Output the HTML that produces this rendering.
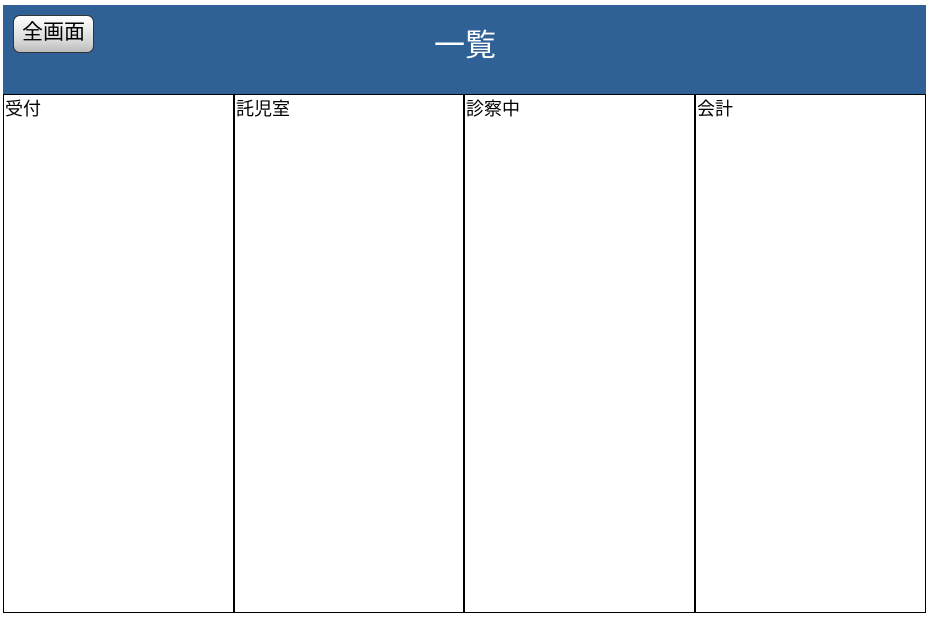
<!DOCTYPE html>
<html><head><meta charset="utf-8"><style>
body{margin:0;background:#fff;width:930px;height:628px;position:relative;overflow:hidden;font-family:"Liberation Sans","Noto Sans CJK JP",sans-serif;}
#hd{position:absolute;left:3px;top:5px;width:923px;height:89px;background:#2f6096;}
#btn{position:absolute;left:13px;top:15px;width:79px;height:36px;border:1px solid #333;border-radius:7px;background:linear-gradient(#fff,#d8d8d8 70%,#bbb);font-size:21px;line-height:34px;text-align:center;color:#000;}
#tt{position:absolute;left:0;width:930px;top:26px;text-align:center;color:#fff;font-size:31px;line-height:40px;}
.c{position:absolute;top:94px;height:517px;border:1px solid #000;font-size:18px;line-height:29px;padding-left:1px;}
</style></head><body>
<div id="hd"></div>
<div id="btn">全画面</div>
<div id="tt">一覧</div>
<div class="c" style="left:3px;width:228px">受付</div>
<div class="c" style="left:234px;width:227px">託児室</div>
<div class="c" style="left:464px;width:228px">診察中</div>
<div class="c" style="left:695px;width:228px">会計</div>
</body></html>
